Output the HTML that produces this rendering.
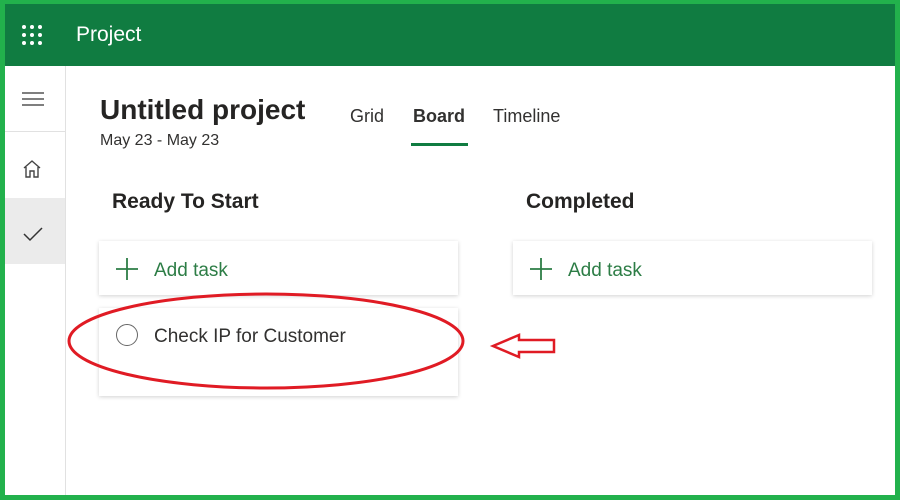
<!DOCTYPE html>
<html><head><style>
*{margin:0;padding:0;box-sizing:border-box}
body{width:900px;height:500px;overflow:hidden;background:#22b14c;font-family:"Segoe UI","Liberation Sans",sans-serif;position:relative}
.in{position:absolute;left:5px;top:4px;right:5px;bottom:5px;background:#fff}
.hdr{position:absolute;left:0;top:0;right:0;height:62px;background:#107c41}
.hdr .t{position:absolute;left:71px;top:19px;color:#fff;font-size:21px}
.side{position:absolute;left:0;top:62px;width:61px;bottom:0;border-right:1px solid #e1e1e1}
.card{position:absolute;background:#fff;box-shadow:0 1px 4px rgba(0,0,0,.18)}
.add{color:#2d7d46;font-size:19px}
</style></head><body><div class="in">
<div class="hdr">
<svg style="position:absolute;left:16px;top:20px" width="22" height="22"><g fill="#fff"><circle cx="3" cy="3" r="2"/><circle cx="11" cy="3" r="2"/><circle cx="19" cy="3" r="2"/><circle cx="3" cy="11" r="2"/><circle cx="11" cy="11" r="2"/><circle cx="19" cy="11" r="2"/><circle cx="3" cy="19" r="2"/><circle cx="11" cy="19" r="2"/><circle cx="19" cy="19" r="2"/></g></svg>
<div class="t">Project</div></div>
<div class="side">
<svg style="position:absolute;left:16px;top:26px" width="24" height="14"><path d="M1 1H23M1 7H23M1 13H23" stroke="#555" stroke-width="1.4"/></svg>
<div style="position:absolute;left:0;top:65px;width:60px;height:1px;background:#e1e1e1"></div>
<svg style="position:absolute;left:17px;top:93px" width="20" height="20"><path d="M2 9L10 2L18 9M4 8V18H8V12H12V18H16V8" fill="none" stroke="#444" stroke-width="1.4"/></svg>
<div style="position:absolute;left:0;top:132px;width:60px;height:66px;background:#ebebeb"></div>
<svg style="position:absolute;left:18px;top:160px" width="20" height="16"><path d="M1 8L7 14L19 2" fill="none" stroke="#333" stroke-width="1.5"/></svg>
</div>
<div style="position:absolute;left:95px;top:90px;font-size:28px;font-weight:bold;color:#252423">Untitled project</div>
<div style="position:absolute;left:95px;top:128px;font-size:16px;color:#323130">May 23 - May 23</div>
<div style="position:absolute;left:345px;top:102px;font-size:18px;color:#323130">Grid</div>
<div style="position:absolute;left:408px;top:102px;font-size:18px;font-weight:bold;color:#323130">Board</div>
<div style="position:absolute;left:406px;top:139px;width:57px;height:3px;background:#107c41"></div>
<div style="position:absolute;left:488px;top:102px;font-size:18px;color:#323130">Timeline</div>
<div style="position:absolute;left:107px;top:186px;font-size:21px;font-weight:bold;color:#252423">Ready To Start</div>
<div style="position:absolute;left:521px;top:186px;font-size:21px;font-weight:bold;color:#252423">Completed</div>
<div class="card" style="left:94px;top:237px;width:359px;height:54px"><svg style="position:absolute;left:17px;top:17px" width="22" height="22"><path d="M11 0V22M0 11H22" stroke="#2d7d46" stroke-width="1.8"/></svg><span class="add" style="position:absolute;left:55px;top:19px">Add task</span></div>
<div class="card" style="left:508px;top:237px;width:359px;height:54px"><svg style="position:absolute;left:17px;top:17px" width="22" height="22"><path d="M11 0V22M0 11H22" stroke="#2d7d46" stroke-width="1.8"/></svg><span class="add" style="position:absolute;left:55px;top:19px">Add task</span></div>
<div class="card" style="left:94px;top:304px;width:359px;height:88px"><div style="position:absolute;left:17px;top:16px;width:22px;height:22px;border:1.5px solid #666;border-radius:50%"></div><span style="position:absolute;left:55px;top:18px;font-size:19px;color:#323130">Check IP for Customer</span></div>
</div>
<svg style="position:absolute;left:0;top:0" width="900" height="500"><ellipse cx="266" cy="341" rx="197" ry="47" fill="none" stroke="#e01b24" stroke-width="3"/><path d="M493 346L519 335V340H554V352H519V357Z" fill="none" stroke="#e01b24" stroke-width="2.5"/></svg>
</body></html>
